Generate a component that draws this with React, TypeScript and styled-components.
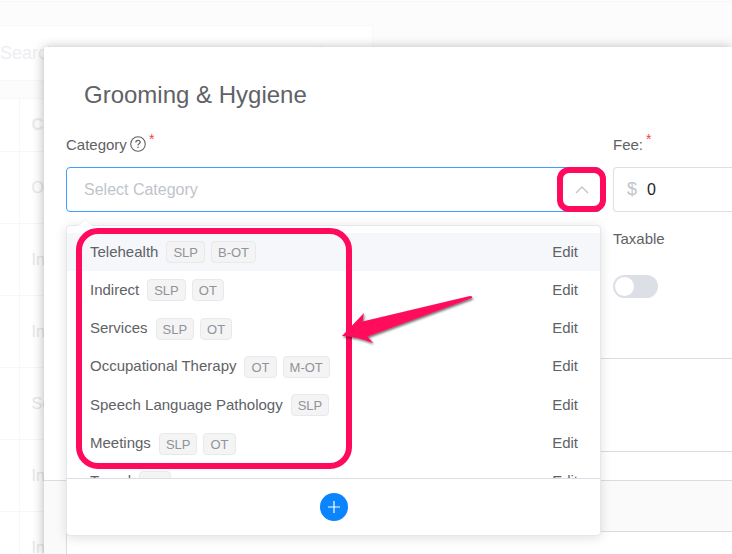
import React from 'react';
import styled, { createGlobalStyle } from 'styled-components';

const PINK = '#ff0a5c';

const GlobalStyle = createGlobalStyle`
  *, *::before, *::after { box-sizing: border-box; }
  body {
    margin: 0;
    overflow: hidden;
    background: #ffffff;
    color: #606266;
    font-family: "Liberation Sans", Arial, sans-serif;
    font-size: 15px;
  }
  button, input { font: inherit; }
`;

const Page = styled.div`
  position: relative;
  height: 100vh;
  overflow: hidden;
`;

const Backdrop = styled.div`
  height: 100%;
  padding-top: 1px;
  background: #fcfcfc;
  color: #e6e7ea;
`;

const TopBar = styled.div`
  height: 24px;
  border-top: 1px solid #f7f7f7;
`;

const SearchBar = styled.div`
  display: flex;
  align-items: center;
  justify-content: space-between;
  width: 373px;
  height: 56px;
  padding-right: 42px;
  border: 1px solid #f8f8f8;
  border-left: 0;
  background: #ffffff;
`;

const SearchInput = styled.input`
  width: 240px;
  padding: 0;
  border: 0;
  outline: 0;
  background: transparent;
  font-size: 18px;
  &::placeholder { color: #eceef1; opacity: 1; }
`;

const Table = styled.table`
  width: 100%;
  margin-top: 17px;
  border-collapse: collapse;
  background: #ffffff;
  font-size: 16px;
  text-align: left;
`;

const Row = styled.tr<{ $head?: boolean }>`
  height: ${(p) => (p.$head ? 53 : 72)}px;
  border-top: 1px solid #f7f7f7;
`;

const IndexCell = styled.td`
  width: 19px;
  padding: 0;
  border-right: 1px solid #f7f7f7;
`;

const NameCell = styled.td`
  padding: 0 12px;
`;

const NameHead = styled.th`
  padding: 0 12px;
  color: #ececee;
`;

const Modal = styled.section`
  position: absolute;
  inset: 47px 0 0 44px;
  display: flex;
  flex-direction: column;
  border-top-left-radius: 2px;
  background: #ffffff;
  box-shadow: 0 1px 12px rgba(0, 0, 0, 0.3);
`;

const Title = styled.h1`
  margin: 0;
  padding: 32px 40px 0;
  font-size: 24px;
  font-weight: 400;
  line-height: 32px;
`;

const FormGrid = styled.div`
  display: grid;
  grid-template-columns: minmax(0, 1fr) 119px;
  column-gap: 12px;
  padding: 20px 0 0 22px;
`;

const Field = styled.div`
  display: flex;
  flex-direction: column;
`;

const LabelRow = styled.div`
  display: flex;
  align-items: center;
  gap: 3px;
  height: 26px;
  margin-bottom: 10px;
`;

const Required = styled.span`
  align-self: flex-start;
  color: #f0483e;
  font-size: 14px;
  line-height: 16px;
`;

const InputBox = styled.div<{ $active?: boolean; $bleed?: boolean }>`
  position: relative;
  display: flex;
  align-items: center;
  height: 45px;
  padding: 0 0 0 ${(p) => (p.$bleed ? 13 : 17)}px;
  border: 1px solid ${(p) => (p.$active ? '#409eff' : '#dcdfe6')};
  border-right-width: ${(p) => (p.$bleed ? 0 : 1)}px;
  border-radius: ${(p) => (p.$bleed ? '4px 0 0 4px' : '4px')};
  background: #ffffff;
`;

const TextInput = styled.input`
  flex: 1;
  min-width: 0;
  padding: 0;
  border: 0;
  outline: 0;
  background: transparent;
  color: #222222;
  font-size: 16px;
  &::placeholder { color: #c0c4cc; opacity: 1; }
`;

const ToggleButton = styled.button`
  display: flex;
  align-items: center;
  justify-content: center;
  width: 37px;
  height: 43px;
  padding: 0;
  border: 0;
  background: transparent;
`;

const Prefix = styled.span`
  width: 20px;
  color: #c0c4cc;
  font-size: 18px;
`;

const ToggleHighlight = styled.span`
  position: absolute;
  inset: -1px -6px -1px auto;
  width: 49px;
  border: 6px solid ${PINK};
  border-radius: 12px;
  pointer-events: none;
`;

const Dropdown = styled.div`
  position: absolute;
  top: 57px;
  left: -1px;
  right: -1px;
  z-index: 2;
  border: 1px solid #e4e7ed;
  border-radius: 4px;
  background: #ffffff;
  box-shadow: 0 2px 12px rgba(0, 0, 0, 0.12);
`;

const Pointer = styled.svg`
  position: absolute;
  top: -7px;
  left: 11px;
`;

const ScrollArea = styled.div`
  height: 252px;
  padding-top: 7px;
  overflow: hidden;
`;

const Options = styled.ul`
  display: grid;
  grid-auto-rows: 1fr;
  height: 268px;
  margin: 0;
  padding: 0;
  list-style: none;
`;

const Option = styled.li<{ $hover?: boolean }>`
  display: flex;
  align-items: center;
  padding: 0 22px 0 23px;
  background: ${(p) => (p.$hover ? '#f5f7fa' : 'transparent')};
`;

const OptionName = styled.span`
  padding-bottom: 2px;
`;

const Tags = styled.span`
  display: flex;
  flex: 1;
  gap: 6px;
  margin-left: 8px;
`;

const Tag = styled.span`
  height: 22px;
  padding: 0 6px;
  border: 1px solid #e9e9eb;
  border-radius: 4px;
  background: #f4f4f5;
  color: #909399;
  font-size: 13px;
  line-height: 21px;
`;

const EditButton = styled.button`
  padding: 0 0 2px;
  border: 0;
  background: transparent;
  color: #606266;
`;

const DropdownFooter = styled.div`
  display: flex;
  align-items: center;
  justify-content: center;
  height: 57px;
  border-top: 1px solid #dcdfe6;
`;

const AddButton = styled.button`
  display: flex;
  align-items: center;
  justify-content: center;
  width: 28px;
  height: 28px;
  padding: 0;
  border: 0;
  border-radius: 50%;
  background: #0a84ff;
`;

const ListHighlight = styled.span`
  position: absolute;
  top: 2px;
  left: 9px;
  width: 276px;
  height: 241px;
  border: 6px solid ${PINK};
  border-radius: 22px;
  pointer-events: none;
`;

const Arrow = styled.svg`
  position: absolute;
  top: 64px;
  left: 270px;
  overflow: visible;
  pointer-events: none;
`;

const TaxLabel = styled.label`
  margin-top: 17px;
  line-height: 20px;
`;

const Switch = styled.input`
  width: 45px;
  height: 23px;
  margin: 26px 0 0;
  border-radius: 12px;
  appearance: none;
  background: #dcdfe6;
  &::before {
    content: '';
    display: block;
    width: 19px;
    height: 19px;
    margin: 2px;
    border-radius: 50%;
    background: #ffffff;
  }
`;

const NotesWrap = styled.div`
  padding: 60px 0 28px 22px;
`;

const Notes = styled.textarea`
  display: block;
  width: 100%;
  height: 94px;
  border: 1px solid #dcdcdc;
  border-right: 0;
  border-radius: 4px 0 0 4px;
  resize: none;
`;

const Details = styled.div`
  display: flex;
  flex: 1;
  padding: 50px 0 0 22px;
  border-top: 1px solid #dcdcdc;
  background: #fafafa;
`;

const DetailsPanel = styled.div`
  flex: 1;
  border: solid #dcdcdc;
  border-width: 1px 0 0 1px;
  background: #ffffff;
`;

const options = [
  { name: 'Telehealth', tags: ['SLP', 'B-OT'] },
  { name: 'Indirect', tags: ['SLP', 'OT'] },
  { name: 'Services', tags: ['SLP', 'OT'] },
  { name: 'Occupational Therapy', tags: ['OT', 'M-OT'] },
  { name: 'Speech Language Pathology', tags: ['SLP'] },
  { name: 'Meetings', tags: ['SLP', 'OT'] },
  { name: 'Travel', tags: ['OT'] },
];

const listed = ['Occupational Therapy', 'Indirect', 'Indirect', 'Services', 'Indirect', 'Indirect'];

export default function App() {
  return (
    <Page>
      <GlobalStyle />
      <Backdrop>
        <TopBar />
        <SearchBar>
          <SearchInput type="search" placeholder="Search" aria-label="Search" />
          <svg width="16" height="16" viewBox="0 0 16 16" fill="none" stroke="#e6e7ea">
            <circle cx="7" cy="7" r="5" />
            <path d="M11 11l4 4" />
          </svg>
        </SearchBar>
        <Table>
          <thead>
            <Row $head>
              <IndexCell />
              <NameHead>Category</NameHead>
            </Row>
          </thead>
          <tbody>
            {listed.map((name, i) => (
              <Row key={i}>
                <IndexCell />
                <NameCell>{name}</NameCell>
              </Row>
            ))}
          </tbody>
        </Table>
      </Backdrop>

      <Modal role="dialog" aria-labelledby="title">
        <Title id="title">Grooming &amp; Hygiene</Title>
        <FormGrid>
          <Field>
            <LabelRow>
              <label htmlFor="category">Category</label>
              <svg width="16" height="16" viewBox="0 0 16 16" fill="none" stroke="#606266">
                <circle cx="8" cy="8" r="7.3" strokeWidth="1.1" />
                <path d="M5.8 6.4c0-1.4 1-2.1 2.2-2.1s2.2.8 2.2 2c0 1.5-2.2 1.6-2.2 3.1" strokeWidth="1.2" />
                <path d="M8 10.7v1.3" strokeWidth="1.3" />
              </svg>
              <Required>*</Required>
            </LabelRow>
            <InputBox $active>
              <TextInput id="category" placeholder="Select Category" readOnly />
              <ToggleButton type="button" aria-label="Close category list">
                <svg width="14" height="8" viewBox="0 0 14 8" fill="none" stroke="#c0c4cc" strokeWidth="1.3">
                  <path d="M1 7l6-6 6 6" />
                </svg>
              </ToggleButton>
              <Dropdown>
                <Pointer width="14" height="8" viewBox="0 0 14 8">
                  <path d="M0 7L6 1q1-1 2 0l6 6v1H0z" fill="#ffffff" />
                  <path d="M0 7L6 1q1-1 2 0l6 6" fill="none" stroke="#ebeef5" />
                </Pointer>
                <ScrollArea>
                  <Options>
                    {options.map((o, i) => (
                      <Option key={o.name} $hover={i === 0}>
                        <OptionName>{o.name}</OptionName>
                        <Tags>
                          {o.tags.map((t) => (
                            <Tag key={t}>{t}</Tag>
                          ))}
                        </Tags>
                        <EditButton type="button">Edit</EditButton>
                      </Option>
                    ))}
                  </Options>
                </ScrollArea>
                <DropdownFooter>
                  <AddButton type="button" aria-label="Add category">
                    <svg width="12" height="12" viewBox="0 0 12 12" stroke="#ffffff" strokeWidth="1.2">
                      <path d="M6 0v12M0 6h12" />
                    </svg>
                  </AddButton>
                </DropdownFooter>
                <ListHighlight />
                <Arrow width="140" height="56" viewBox="0 0 140 56">
                  <defs>
                    <filter id="shade" x="-10%" y="-20%" width="120%" height="150%">
                      <feDropShadow dx="1" dy="1.5" stdDeviation="1.2" floodOpacity="0.6" />
                    </filter>
                  </defs>
                  <path
                    d="M5 46L27 23L25.5 31.5L133 6L135 6.5L135 8L30.5 46.5L36 53Q22 47 5 46Z"
                    fill={PINK}
                    filter="url(#shade)"
                  />
                </Arrow>
              </Dropdown>
              <ToggleHighlight />
            </InputBox>
          </Field>
          <Field>
            <LabelRow>
              <label htmlFor="fee">Fee:</label>
              <Required>*</Required>
            </LabelRow>
            <InputBox $bleed>
              <Prefix>$</Prefix>
              <TextInput id="fee" defaultValue="0" />
            </InputBox>
            <TaxLabel htmlFor="taxable">Taxable</TaxLabel>
            <Switch id="taxable" type="checkbox" role="switch" />
          </Field>
        </FormGrid>
        <NotesWrap>
          <Notes aria-label="Notes" />
        </NotesWrap>
        <Details>
          <DetailsPanel />
        </Details>
      </Modal>
    </Page>
  );
}
